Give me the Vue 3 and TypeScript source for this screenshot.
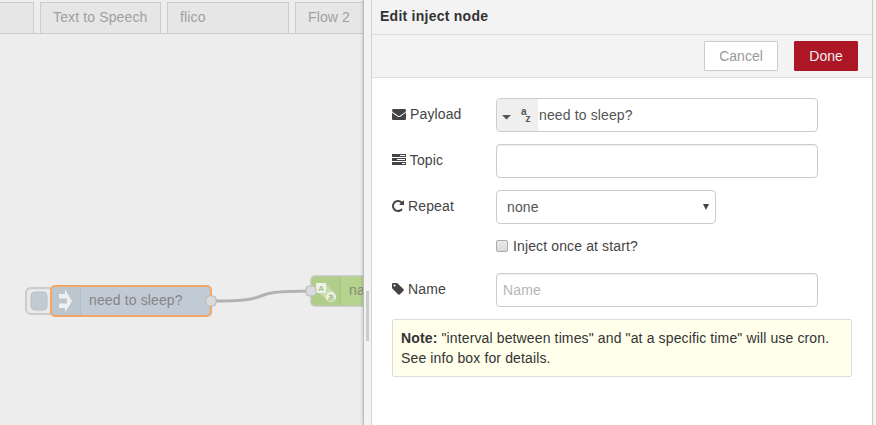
<script setup lang="ts">
import { ref } from 'vue'

const tabs = ['', 'Text to Speech', 'flico', 'Flow 2']
const payload = ref('need to sleep?')
const topic = ref('')
const name = ref('')
</script>

<template>
  <div class="editor">
    <section class="workspace">
      <nav class="tabs">
        <div v-for="(tab, i) in tabs" :key="i" class="tab" :class="{ first: i === 0 }">{{ tab }}</div>
      </nav>
      <svg class="canvas" width="363" height="391" viewBox="0 34 363 391">
        <path d="M211 301C286 301 236 291 311 291" fill="none" stroke="#b3b3b3" stroke-width="3" />
        <rect x="26" y="288" width="32" height="26" rx="5" fill="#e9e9e9" stroke="#ccc" stroke-width="2" />
        <rect x="31" y="292" width="16" height="18" rx="4" fill="#c1cbd4" stroke="#b9c0c6" />
        <rect x="51" y="286" width="160" height="30" rx="4" fill="#c1cbd5" />
        <path d="M55 286H81V316H55Q51 316 51 312V290Q51 286 55 286Z" fill="#bcc6cf" />
        <path d="M80.5 287V315" stroke="#b4bec7" />
        <rect x="51" y="286" width="160" height="30" rx="4" fill="none" stroke="#f0a869" stroke-width="2" />
        <path d="M59 294H65V289.5L72 301L65 312.5V308H59V303.5H67V298.5H59Z" fill="#efefef" />
        <text x="89" y="305" fill="#858585">need to sleep?</text>
        <rect x="206" y="296" width="10" height="10" rx="3" fill="#dadada" stroke="#b8b8b8" />
        <rect x="311" y="276" width="120" height="30" rx="4" fill="#b5d28e" stroke="#c3c7bd" stroke-width="1.5" />
        <path d="M315 277H341V305H315Q312 305 312 302V280Q312 277 315 277Z" fill="#b0cd89" />
        <path d="M340.500 277V305" stroke="#a6c181" />
        <path d="M325 283L335 293L327 300L318 292Z" fill="#c8dcae" />
        <rect x="316" y="283" width="10" height="10" rx="1" fill="#eff2e9" />
        <circle cx="331" cy="297" r="5" fill="#eff2e9" />
        <text class="glyph" x="318.200" y="290.500">A</text>
        <text class="glyph cjk" x="327.500" y="299.600">あ</text>
        <text x="349" y="295" fill="#858a7b">na</text>
        <rect x="306" y="286" width="10" height="10" rx="3" fill="#dadada" stroke="#b8b8b8" />
      </svg>
    </section>

    <div class="separator"><span class="grip"></span></div>

    <section class="tray">
      <header class="title">Edit inject node</header>
      <div class="toolbar">
        <button class="button">Cancel</button>
        <button class="button primary">Done</button>
      </div>
      <form class="form" @submit.prevent>
        <div class="row">
          <label>
            <svg class="icon" width="14" height="14" viewBox="0 0 1792 1792"><path d="M1792 710v794q0 66-47 113t-113 47h-1472q-66 0-113-47t-47-113v-794q44 49 101 87 362 246 497 345 57 42 92.500 65.500t94.500 48 110 24.500h2q51 0 110-24.500t94.500-48 92.500-65.500q170-123 498-345 57-39 100-87zm0-294q0 79-49 151t-122 123q-376 261-468 325-10 7-42.500 31t-54 38.500-52 32.500-57.500 27-50 9h-2q-23 0-50-9t-57.500-27-52-32.500-54-38.500-42.500-31q-91-64-262-182.500t-205-142.500q-62-42-117-115.500t-55-136.500q0-78 41.500-130t118.500-52h1472q65 0 112.500 47t47.500 113z" /></svg>
            Payload
          </label>
          <div class="field typed">
            <span class="type">
              <svg width="41" height="32" viewBox="0 0 41 32">
                <path d="M5 16H14L9.500 20.500Z" fill="#555" />
                <text x="24" y="16">a</text>
                <text x="28.500" y="23">z</text>
              </svg>
            </span>
            <input v-model="payload" type="text" />
          </div>
        </div>
        <div class="row">
          <label>
            <svg class="icon" width="14" height="14" viewBox="0 0 14 14"><path fill-rule="evenodd" d="M0 1H14V4H0ZM8 2V3H13V2ZM0 5H14V8H0ZM5 6V7H13V6ZM0 9H14V12H0ZM10 10V11H13V10Z" /></svg>
            Topic
          </label>
          <input v-model="topic" class="field" type="text" />
        </div>
        <div class="row">
          <label>
            <svg class="icon" width="12" height="14" viewBox="128 0 1536 1792"><path d="M1664 256v448q0 26-19 45t-45 19h-448q-42 0-59-40-17-39 14-69l138-138q-148-137-349-137-104 0-198.500 40.500t-163.500 109.500-109.500 163.500-40.500 198.500 40.500 198.500 109.500 163.500 163.500 109.500 198.500 40.500q119 0 225-52t179-147q7-10 23-12 15 0 25 9l137 138q9 8 9.500 20.500t-7.500 22.500q-109 132-264 204.500t-327 72.500q-156 0-298-61t-245-164-164-245-61-298 61-298 164-245 245-164 298-61q147 0 284.500 55.500t244.500 156.500l130-129q29-31 70-14 39 17 39 59z" /></svg>
            Repeat
          </label>
          <div class="field select">
            <span>none</span>
            <svg width="6" height="6" viewBox="0 0 6 6"><path d="M0 0H6L3 6Z" fill="#444" /></svg>
          </div>
        </div>
        <div class="once"><span class="checkbox"></span>Inject once at start?</div>
        <div class="row">
          <label>
            <svg class="icon" width="12" height="14" viewBox="128 0 1536 1792"><path d="M576 448q0-53-37.500-90.500t-90.500-37.500-90.500 37.500-37.500 90.500 37.500 90.500 90.500 37.500 90.500-37.500 37.500-90.500zm1067 576q0 53-37 90l-491 492q-39 37-91 37-53 0-90-37l-715-716q-38-37-64.500-101t-26.500-117v-416q0-52 38-90t90-38h416q53 0 117 26.500t102 64.500l715 714q37 39 37 91z" /></svg>
            Name
          </label>
          <input v-model="name" class="field" type="text" placeholder="Name" />
        </div>
        <div class="note"><b>Note:</b> "interval between times" and "at a specific time" will use cron.<br />See info box for details.</div>
      </form>
    </section>
    <aside class="edge"></aside>
  </div>
</template>

<style>
body {
  overflow: hidden;
}
</style>

<style scoped>
.editor {
  display: flex;
  width: 876px;
  height: 425px;
  overflow: hidden;
  background: #f3f3f3;
  color: #444;
  font: 14px/20px "Liberation Sans", Arial, sans-serif;
  letter-spacing: 0.13px;
}
.editor * {
  box-sizing: border-box;
}
.workspace {
  width: 363px;
  overflow: hidden;
  background: #ededed;
}
.tabs {
  display: flex;
  gap: 6px;
  width: 420px;
  height: 34px;
  padding-top: 2px;
  border-bottom: 1px solid #ccc;
}
.tab {
  width: 121px;
  height: 31px;
  padding: 4px 12px;
  border: 1px solid #ccc;
  border-bottom: 0;
  background: #e6e6e6;
  color: #a0a0a0;
  white-space: nowrap;
}
.tab.first {
  width: 34px;
  border-left: 0;
}
.tab:nth-child(3) {
  width: 122px;
}
.canvas {
  display: block;
}
.canvas .glyph {
  fill: #a8c480;
  font-size: 8px;
  font-weight: bold;
}
.canvas .cjk {
  font-family: "Noto Sans CJK JP", sans-serif;
  font-size: 7px;
}
.separator {
  display: flex;
  align-items: center;
  width: 9px;
  padding: 206px 0 0 2px;
  border-left: 1px solid #bbb;
  border-right: 1px solid #d2d2d2;
  box-shadow: -1px 0 3px rgba(0, 0, 0, 0.12);
  background: #f3f3f3;
}
.grip {
  width: 3px;
  height: 50px;
  background: #ccc;
}
.tray {
  width: 500px;
  background: #fff;
}
.title {
  height: 35px;
  padding: 6px 8px;
  border-bottom: 1px solid #ddd;
  background: #f3f3f3;
  color: #333;
  font-weight: bold;
  letter-spacing: 0.25px;
}
.toolbar {
  display: flex;
  justify-content: flex-end;
  gap: 16px;
  height: 43px;
  padding: 6px 14px;
  border-bottom: 1px solid #ddd;
  background: #f3f3f3;
}
.button {
  width: 74px;
  height: 30px;
  padding: 0;
  border: 1px solid #ccc;
  border-radius: 1px;
  background: #fff;
  color: #999;
  font: inherit;
}
.button.primary {
  width: 64px;
  border-color: #ad1625;
  background: #ad1625;
  color: #eee;
}
.form {
  padding: 20px;
}
.row {
  display: flex;
  height: 34px;
  margin-bottom: 12px;
}
label {
  width: 104px;
  padding-top: 6px;
  white-space: nowrap;
}
.icon {
  display: inline-block;
  margin-right: 0;
  vertical-align: -2px;
  fill: #444;
}
.field {
  width: 322px;
  height: 34px;
  padding: 0 6px;
  border: 1px solid #ccc;
  border-radius: 4px;
  outline: 0;
  background: #fff;
  color: #555;
  font: inherit;
  letter-spacing: inherit;
}
input.field {
  box-shadow: inset 0 1px 1px rgba(0, 0, 0, 0.075);
}
.field::placeholder {
  color: #b5b5b5;
  opacity: 1;
}
.typed {
  display: flex;
  padding: 0;
  overflow: hidden;
}
.typed input {
  flex: 1;
  min-width: 0;
  padding: 0 1px;
  border: 0;
  background: transparent;
  color: #555;
  font: inherit;
  letter-spacing: inherit;
}
.type {
  width: 41px;
  background: #efefef;
}
.type text {
  fill: #555;
  font-size: 10px;
  font-weight: bold;
}
.select {
  display: flex;
  align-items: center;
  justify-content: space-between;
  width: 220px;
  padding: 0 6px 0 10px;
}
.once {
  display: flex;
  align-items: center;
  gap: 5px;
  height: 20px;
  margin: 0 0 17px 104px;
}
.checkbox {
  width: 12px;
  height: 12px;
  border: 1px solid #aaa;
  border-radius: 2px;
  background: linear-gradient(#e9e9e9, #dcdcdc);
}
.note {
  height: 58px;
  padding: 8px;
  border: 1px solid #ddd;
  border-radius: 2px;
  background: #ffffec;
  color: #333;
  white-space: nowrap;
}
.edge {
  width: 4px;
  border-left: 1px solid #ccc;
  background: #f3f3f3;
}
</style>
